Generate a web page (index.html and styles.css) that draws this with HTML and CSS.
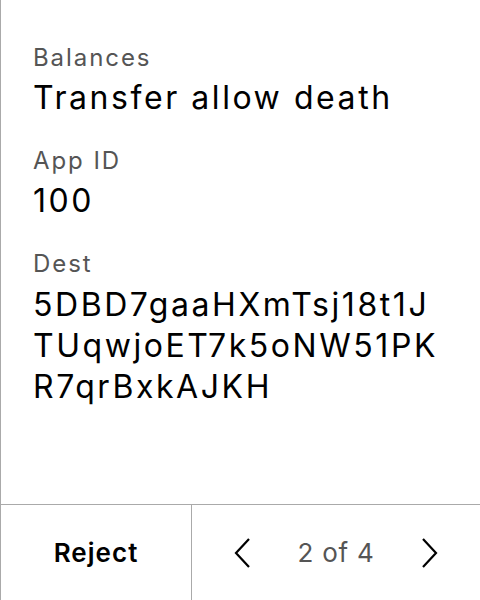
FILE: index.html
```html
<!DOCTYPE html>
<html lang="en">
<head>
<meta charset="utf-8">
<link rel="stylesheet" href="styles.css">
</head>
<body>
<div class="screen">
  <div class="content">
    <div class="field">
      <div class="label">Balances</div>
      <div class="value">Transfer allow death</div>
    </div>
    <div class="field">
      <div class="label">App ID</div>
      <div class="value">100</div>
    </div>
    <div class="field">
      <div class="label">Dest</div>
      <div class="value address">5DBD7gaaHXmTsj18t1JTUqwjoET7k5oNW51PKR7qrBxkAJKH</div>
    </div>
  </div>
  <div class="footer">
    <button class="reject">Reject</button>
    <div class="pager">
      <svg class="chev" width="18" height="32" viewBox="0 0 18 32"><path d="M16 2 L3 16 L16 30" fill="none" stroke="#000" stroke-width="2.2"/></svg>
      <span class="count">2 of 4</span>
      <svg class="chev" width="18" height="32" viewBox="0 0 18 32"><path d="M2 2 L15 16 L2 30" fill="none" stroke="#000" stroke-width="2.2"/></svg>
    </div>
  </div>
</div>
</body>
</html>
```
FILE: styles.css
```css
* { box-sizing: border-box; }
html, body { margin: 0; padding: 0; background: #fff; }
body { font-family: Inter, "Noto Sans", sans-serif; color: #000; }
.screen {
  width: 480px;
  height: 600px;
  border-left: 1px solid #aaa;
  display: flex;
  flex-direction: column;
}
.content {
  flex: 1;
  padding: 42px 32px 0 32px;
  display: flex;
  flex-direction: column;
  gap: 27px;
}
.field { display: flex; flex-direction: column; gap: 4px; }
.label { font-size: 24px; line-height: 32px; color: #555; letter-spacing: 0.08em; }
.value { font-size: 32px; line-height: 40px; color: #000; letter-spacing: 0.08em; }
.address { line-height: 41px; word-break: break-all; }
.footer {
  height: 96px;
  border-top: 1px solid #aaa;
  display: flex;
}
.reject {
  width: 191px;
  border: 0;
  border-right: 1px solid #aaa;
  background: #fff;
  font-family: inherit;
  font-size: 26px;
  font-weight: 600;
  letter-spacing: 0.04em;
  color: #000;
  padding: 0;
}
.pager {
  flex: 1;
  display: flex;
  align-items: center;
  justify-content: space-between;
  padding: 0 41px 0 41px;
}
.count { font-size: 26px; color: #555; letter-spacing: 0.03em; }
```
